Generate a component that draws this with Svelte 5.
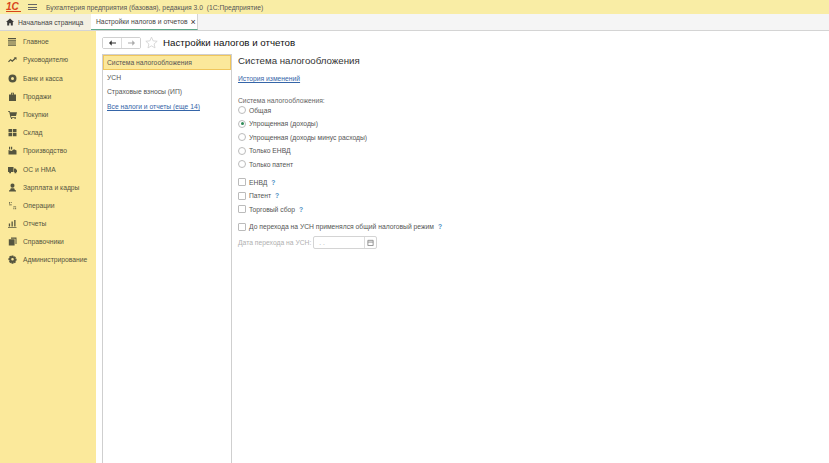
<script>
  const menu = [
    { name: 'Главное', icon: 'M0 1h8v1.200H0zM0 3.200h8v1.200H0zM0 5.400h8v1.200H0zM0 7.600h8v1.200H0z' },
    { name: 'Руководителю', icon: 'M0 6.500l2.500-2.500 1.800 1.300L6.600 3 5.800 2.200H8.500v2.700L7.600 4 4.300 7 2.500 5.600 1 7.200z' },
    { name: 'Банк и касса', icon: 'M4.500 .5a4 4 0 1 0 0 8 4 4 0 0 0 0-8zM4.500 3a1.500 1.500 0 1 1 0 3 1.500 1.500 0 0 1 0-3z' },
    { name: 'Продажи', icon: 'M3 2.500V.8h3v1.700H8v6.500H1V2.500zM3.800 2.500h1.400V1.500H3.800z' },
    { name: 'Покупки', icon: 'M0 1h1.800l.4 1.300H9L8 6H3l.3 1H8v.8H2.500L1.200 1.800H0zM3 8h1.200v1.200H3zM6.500 8h1.200v1.200H6.500z' },
    { name: 'Склад', icon: 'M.5 1h3.600v3.200H.5zM4.900 1h3.600v3.200H4.900zM.5 5h3.600v3.200H.5zM4.900 5h3.600v3.200H4.900z' },
    { name: 'Производство', icon: 'M1 .8h1.200v2.700H1zM3 .8h1.200v2.700H3zM.5 4l3 1 2.500-1.800 2.500 1.300v4H.5z' },
    { name: 'ОС и НМА', icon: 'M0 2h5.500v5H0zM6 3.500h1.500L9 5.200V7H6zM1.200 7h1.800v1.200H1.200zM6.500 7h1.800v1.200H6.500z' },
    { name: 'Зарплата и кадры', icon: 'M4.500 .5a2 2 0 0 1 2 2.200 2 2 0 0 1-4 0 2 2 0 0 1 2-2.200zM2.800 5.200h3.400l.8 2h1v1.300H1V7.200h1z' },
    { name: 'Операции', icon: 'M1 1h.8v1.800H1zM2.800 1h.8v1H2.800zM5.500 6.500h.8v1.800H5.500zM7.300 6.500h.8v1.800H7.300zM1 3.600h2.800v.6H1zM5.300 5.200h2.800v.6H5.300z' },
    { name: 'Отчеты', icon: 'M.8 4.500h1.300v3H.8zM3.500 2.500h1.300v5H3.500zM6.200 1h1.300v6.500H6.200zM0 8h8.500v.8H0z' },
    { name: 'Справочники', icon: 'M3 .5h5.500v6.500H7.500V1.800H3zM.8 2.200h5.800v6.300H.8z' },
    { name: 'Администрирование', icon: 'M3.600.5h1.800l.3 1.300 1.100-.6 1.200 1.200-.7 1.100 1.300.3v1.800l-1.300.3.700 1.100-1.200 1.200-1.100-.7-.3 1.300H3.600l-.3-1.300-1.100.7L1 6.500l.7-1.100L.4 5.100V3.300l1.300-.3L1 1.900 2.200.7l1.100.6zM4.500 3a1.300 1.300 0 1 0 0 2.600 1.300 1.300 0 0 0 0-2.600z' }
  ];
  const sections = ['Система налогообложения', 'УСН', 'Страховые взносы (ИП)'];
  const radios = ['Общая', 'Упрощенная (доходы)', 'Упрощенная (доходы минус расходы)', 'Только ЕНВД', 'Только патент'];
  const checks = ['ЕНВД', 'Патент', 'Торговый сбор'];
</script>

<div class="app">
  <header class="topbar">
    <span class="logo">1С</span>
    <span class="burger"><i></i><i></i><i></i></span>
    <span class="title">Бухгалтерия предприятия (базовая), редакция 3.0&nbsp; (1С:Предприятие)</span>
  </header>

  <nav class="tabs">
    <div class="tab home">
      <svg width="8" height="8" viewBox="0 0 10 10"><path fill="#3a3a3a" d="M5 .5 10 5H8.500v4.500H6V6.500H4v3H1.500V5H0z"/></svg>
      Начальная страница
    </div>
    <div class="tab active">Настройки налогов и отчетов <span class="close">×</span></div>
  </nav>

  <div class="main">
    <aside class="sidebar">
      {#each menu as item}
        <div class="menu-item">
          <svg width="9" height="9" viewBox="0 0 9 9"><path fill="#55553f" fill-rule="evenodd" d={item.icon}/></svg>
          <span>{item.name}</span>
        </div>
      {/each}
    </aside>

    <section class="content">
      <div class="head">
        <div class="nav-btns">
          <button aria-label="Назад"><svg width="7" height="6" viewBox="0 0 9 7"><path fill="#333" d="M0 3.500 3.500 0v3H9v1H3.500v3z"/></svg></button>
          <button aria-label="Вперед"><svg width="7" height="6" viewBox="0 0 9 7"><path fill="#aaa" d="M9 3.500 5.500 0v3H0v1h5.500v3z"/></svg></button>
        </div>
        <svg class="star" width="13" height="13" viewBox="0 0 24 24"><path fill="none" stroke="#d0d0d0" stroke-width="1.500" d="M12 2l3 7 7.500.7-5.700 5 1.700 7.300L12 18.200 5.500 22l1.700-7.300-5.700-5L9 9z"/></svg>
        <h1>Настройки налогов и отчетов</h1>
      </div>

      <div class="body">
        <div class="list">
          {#each sections as s, i}
            <div class="list-item" class:selected={i === 0}>{s}</div>
          {/each}
          <a class="list-item link" href="#all">Все налоги и отчеты (еще 14)</a>
        </div>

        <div class="form">
          <h2>Система налогообложения</h2>
          <a class="link history" href="#history">История изменений</a>
          <div class="label">Система налогообложения:</div>
          <div class="radios">
            {#each radios as r, i}
              <div class="radio-row"><span class="radio" class:on={i === 1}></span>{r}</div>
            {/each}
          </div>
          <div class="checks">
            {#each checks as c}
              <div class="check-row"><span class="check"></span>{c} <b>?</b></div>
            {/each}
          </div>
          <div class="check-row general"><span class="check"></span>До перехода на УСН применялся общий налоговый режим <b>?</b></div>
          <div class="date-row">
            <span>Дата перехода на УСН:</span>
            <div class="date">
              <span class="dots">. .</span>
              <span class="cal"><svg width="7" height="7" viewBox="0 0 8 8"><path fill="none" stroke="#888" d="M1 1.500h6v6H1zM1 3.500h6"/></svg></span>
            </div>
          </div>
        </div>
      </div>
    </section>
  </div>
</div>

<style>
  :global(body) { margin: 0; }
  .app {
    width: 829px;
    height: 463px;
    display: flex;
    flex-direction: column;
    overflow: hidden;
    background: #fff;
    font-family: "Liberation Sans", Arial, sans-serif;
    font-size: 6.750px;
    color: #555;
  }
  .topbar {
    height: 14px;
    flex: none;
    display: flex;
    align-items: center;
    background: #f9eda5;
    padding-left: 6px;
  }
  .logo {
    color: #d8451c;
    font-weight: bold;
    font-size: 10px;
    line-height: 9px;
    width: 15px;
    height: 10px;
    box-sizing: border-box;
    border-bottom: 1px solid #d8451c;
    font-style: italic;
  }
  .burger { display: flex; flex-direction: column; gap: 1.500px; width: 9px; margin-left: 7px; }
  .burger i { height: 1px; background: #666; }
  .title { margin-left: 9px; color: #555; }
  .tabs {
    height: 17px;
    flex: none;
    display: flex;
    background: #f5f5f5;
    border-bottom: 1px solid #d4d4d4;
    box-sizing: border-box;
  }
  .tab { display: flex; align-items: center; white-space: nowrap; box-sizing: border-box; }
  .home { width: 91px; padding-left: 6px; gap: 4px; background: #f3f0e2; color: #444; }
  .active {
    width: 107px;
    padding-left: 5px;
    gap: 3px;
    background: #fff;
    border-right: 1px solid #d4d4d4;
    border-bottom: 1px solid #5ea98a;
    height: 16px;
    color: #444;
  }
  .close { font-size: 9px; color: #333; }
  .main { flex: 1; display: flex; min-height: 0; }
  .sidebar {
    width: 96px;
    flex: none;
    background: #fbe99b;
    padding-top: 1.600px;
    box-sizing: border-box;
  }
  .menu-item {
    height: 18.200px;
    display: flex;
    align-items: center;
    padding-left: 8px;
    gap: 6px;
    color: #55553f;
    white-space: nowrap;
  }
  .content { flex: 1; display: flex; flex-direction: column; min-width: 0; padding-left: 6px; }
  .head { height: 23px; flex: none; display: flex; align-items: center; }
  .nav-btns { display: flex; width: 39px; height: 12px; border: 1px solid #d0d0d0; border-radius: 2px; box-sizing: border-box; }
  .nav-btns button {
    flex: 1;
    padding: 0;
    border: 0;
    background: #fff;
    display: flex;
    align-items: center;
    justify-content: center;
  }
  .nav-btns button + button { border-left: 1px solid #dcdcdc; }
  .star { margin-left: 4px; }
  h1 { margin: 0 0 0 5px; font-size: 9.750px; font-weight: normal; color: #111; }
  .body { flex: 1; display: flex; min-height: 0; }
  .list {
    width: 130px;
    flex: none;
    box-sizing: border-box;
    border: 1px solid #cfcfcf;
    border-bottom: 0;
  }
  .list-item { display: block; height: 14.700px; line-height: 15.400px; padding-left: 4px; color: #555; white-space: nowrap; }
  .list-item.selected { background: #fbe89b; box-shadow: inset 0 0 0 1px #f0c65c; }
  .list-item.link, .link { color: #3565a8; text-decoration: underline; }
  .form { flex: 1; padding: 0 0 0 6px; min-width: 0; }
  h2 { margin: 0; font-size: 9.700px; line-height: 14px; font-weight: normal; color: #333; }
  .history { display: block; margin-top: 6px; line-height: 10px; }
  .label { margin-top: 12px; line-height: 9px; color: #666; }
  .radio-row { height: 13.500px; display: flex; align-items: center; gap: 3px; white-space: nowrap; }
  .radios { margin-top: -1.300px; }
  .radio {
    width: 8px;
    height: 8px;
    border: 1px solid #bbb;
    border-radius: 50%;
    box-sizing: border-box;
    background: #fff;
    position: relative;
  }
  .radio.on::after {
    content: '';
    position: absolute;
    inset: 1.500px;
    border-radius: 50%;
    background: #2e8b57;
  }
  .checks { margin-top: 4.300px; }
  .check-row { height: 13.500px; display: flex; align-items: center; gap: 3px; white-space: nowrap; }
  .check { width: 8px; height: 8px; border: 1px solid #bbb; border-radius: 1px; box-sizing: border-box; background: #fff; }
  .check-row b { font-weight: bold; color: #4d8fc4; margin-left: 1px; }
  .general { margin-top: 4px; }
  .date-row { display: flex; align-items: center; gap: 2px; height: 14px; margin-top: 2px; color: #b0b0b0; white-space: nowrap; }
  .date {
    width: 64px;
    height: 13px;
    border: 1px solid #d4d4d4;
    border-radius: 2px;
    box-sizing: border-box;
    display: flex;
    justify-content: space-between;
    align-items: center;
    padding-left: 5px;
  }
  .cal { width: 11px; height: 100%; border-left: 1px solid #dcdcdc; display: flex; align-items: center; justify-content: center; }
</style>
